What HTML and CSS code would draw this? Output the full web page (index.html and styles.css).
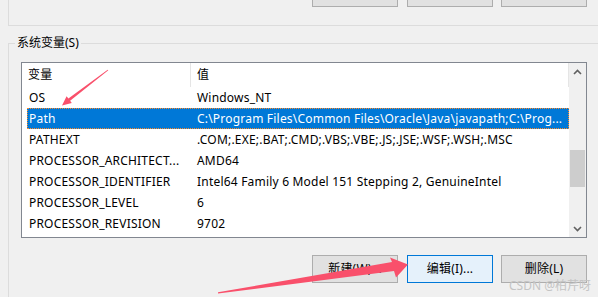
FILE: index.html
```html
<!DOCTYPE html>
<html lang="zh-CN">
<head>
    <meta charset="UTF-8">
    <title>系统变量</title>
    <link rel="stylesheet" href="styles.css">
</head>
<body>
    <div class="page">
        <div class="group group-user">
            <!-- 上方按钮只露出底边 -->
            <div class="btn-row btn-row-top">
                <button class="btn"></button>
                <button class="btn"></button>
                <button class="btn"></button>
            </div>
        </div>

        <div class="group group-system">
            <div class="group-title">系统变量(S)</div>

            <div class="listview">
                <div class="list-body">
                    <div class="list-header">
                        <div class="col-head">变量</div>
                        <div class="col-head">值</div>
                    </div>
                    <div class="list-row">
                        <div class="cell">OS</div>
                        <div class="cell">Windows_NT</div>
                    </div>
                    <div class="list-row selected">
                        <div class="cell">Path</div>
                        <div class="cell">C:\Program Files\Common Files\Oracle\Java\javapath;C:\Prog...</div>
                    </div>
                    <div class="list-row">
                        <div class="cell">PATHEXT</div>
                        <div class="cell">.COM;.EXE;.BAT;.CMD;.VBS;.VBE;.JS;.JSE;.WSF;.WSH;.MSC</div>
                    </div>
                    <div class="list-row">
                        <div class="cell">PROCESSOR_ARCHITECT...</div>
                        <div class="cell">AMD64</div>
                    </div>
                    <div class="list-row">
                        <div class="cell">PROCESSOR_IDENTIFIER</div>
                        <div class="cell">Intel64 Family 6 Model 151 Stepping 2, GenuineIntel</div>
                    </div>
                    <div class="list-row">
                        <div class="cell">PROCESSOR_LEVEL</div>
                        <div class="cell">6</div>
                    </div>
                    <div class="list-row">
                        <div class="cell">PROCESSOR_REVISION</div>
                        <div class="cell">9702</div>
                    </div>
                </div>

                <div class="scrollbar">
                    <div class="scroll-btn">
                        <svg width="9" height="6" viewBox="0 0 9 6"><path d="M1 5 L4.5 1.5 L8 5" fill="none" stroke="#606060" stroke-width="1.6"/></svg>
                    </div>
                    <div class="scroll-track">
                        <div class="scroll-thumb"></div>
                    </div>
                    <div class="scroll-btn">
                        <svg width="9" height="6" viewBox="0 0 9 6"><path d="M1 1 L4.5 4.5 L8 1" fill="none" stroke="#606060" stroke-width="1.6"/></svg>
                    </div>
                </div>
            </div>

            <div class="btn-row btn-row-bottom">
                <button class="btn">新建(W)...</button>
                <button class="btn btn-default">编辑(I)...</button>
                <button class="btn">删除(L)</button>
            </div>
        </div>

        <!-- 标注箭头 -->
        <svg class="marks" width="598" height="297" viewBox="0 0 598 297">
            <polygon points="108.3,70.3 70.1,100.7 71.8,102.9 62,105.5 66.6,96.2 68.4,98.4 107.7,69.7" fill="#f9506b"/>
            <polygon points="218,292.3 392,262 390,257.5 408,264.5 396,277.5 394,271 218,293.6" fill="#f9506b"/>
        </svg>

        <div class="watermark">CSDN @柏芹呀</div>
    </div>
</body>
</html>
```

FILE: styles.css
```css
body {
    margin: 0;
    background-color: #f0f0f0;
    font-family: "Noto Sans", "Noto Sans CJK SC", sans-serif;
    font-size: 12px;
    color: #000;
}

.page {
    position: relative;
    width: 598px;
    height: 297px;
    overflow: hidden;
}

.group {
    display: flow-root;
    margin-left: 8px;
    margin-right: -6px;
    border-left: 1px solid #dcdcdc;
}

.group-user {
    height: 26px;
    box-sizing: border-box;
    border-bottom: 1px solid #dcdcdc;
}

.group-system {
    margin-top: 17px;
    height: 260px;
    border-top: 1px solid #dcdcdc;
}

.group-title {
    width: fit-content;
    margin-top: -9px;
    margin-left: 6px;
    padding: 0 2px;
    height: 16px;
    line-height: 16px;
    background-color: #f0f0f0;
}

/* 按钮 */
.btn-row {
    display: flex;
    justify-content: flex-end;
    gap: 8px;
    width: 578px;
}

.btn-row-top {
    margin-top: -16px;
}

.btn-row-bottom {
    margin-top: 17px;
}

.btn-row .btn:first-child {
    margin-right: 1px;
}

.btn {
    width: 86px;
    height: 28px;
    box-sizing: border-box;
    border: 1px solid #adadad;
    background-color: #e1e1e1;
    font-family: "Noto Sans", "Noto Sans CJK SC", sans-serif;
    font-size: 12px;
    line-height: 16px;
    letter-spacing: 0.2px;
    color: #000;
    padding: 0;
}

.btn-row-top .btn {
    height: 23px;
}

.btn-default {
    border-color: #0078d7;
    background-color: #e5f1fb;
}

/* 列表 */
.listview {
    display: flex;
    margin-top: 11px;
    margin-left: 12px;
    width: 566px;
    height: 176px;
    box-sizing: border-box;
    border: 1px solid #828790;
    background-color: #fff;
}

.list-body {
    flex: 1;
    min-width: 0;
    overflow: hidden;
    letter-spacing: 0.2px;
}

.list-header {
    display: grid;
    grid-template-columns: 169px 1fr;
    height: 24px;
}

.col-head {
    padding-left: 6px;
    line-height: 24px;
    border-right: 1px solid #e5e5e5;
}

.list-row {
    display: grid;
    grid-template-columns: 168px 1fr;
    margin-left: 5px;
    height: 21px;
    line-height: 21px;
}

.cell {
    padding-left: 2px;
    white-space: nowrap;
    overflow: hidden;
}

.list-row.selected {
    background-color: #0078d7;
    color: #fff;
    outline: 1px dotted #ff8a28;
    outline-offset: -1px;
}

/* 滚动条 */
.scrollbar {
    display: flex;
    flex-direction: column;
    width: 17px;
    background-color: #f0f0f0;
}

.scroll-btn {
    height: 17px;
    display: flex;
    align-items: center;
    justify-content: center;
}

.scroll-track {
    flex: 1;
}

.scroll-thumb {
    margin: 70px 1px 0;
    height: 37px;
    background-color: #cdcdcd;
}

.marks {
    position: absolute;
    left: 0;
    top: 0;
    pointer-events: none;
}

.watermark {
    position: absolute;
    right: 7px;
    bottom: 5px;
    font-size: 12px;
    line-height: 12px;
    color: #c4c4c4;
}
```
